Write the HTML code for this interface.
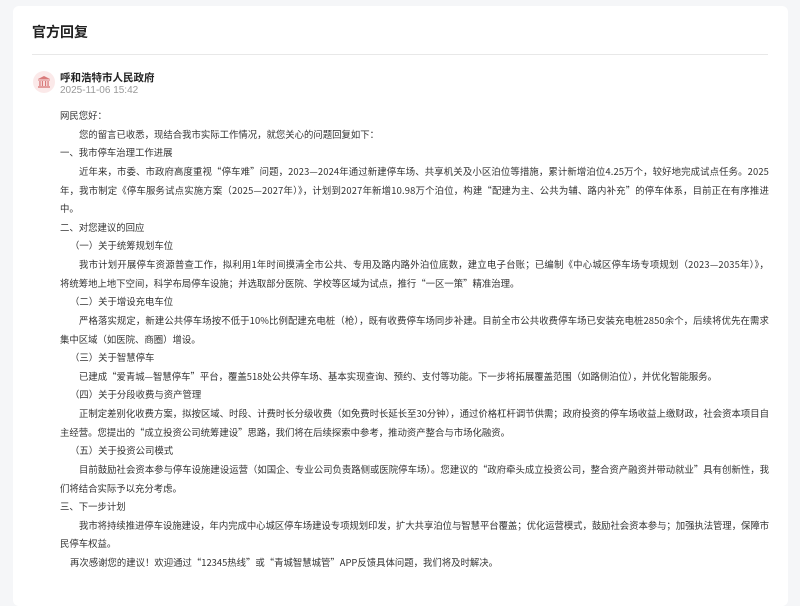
<!DOCTYPE html>
<html><head><meta charset="utf-8"><style>
html,body{margin:0;padding:0;background:#f5f6f8;width:800px;height:572px;overflow:hidden}
.card{position:absolute;left:13px;top:6px;width:775px;height:600px;background:#fff;border-radius:6px}
.title{position:absolute;left:32px;top:22px;font:bold 14px "Liberation Sans","Noto Sans CJK SC",sans-serif;color:#222}
.hr{position:absolute;left:32px;top:54px;width:736px;height:1px;background:#e8e8e8}
.av{position:absolute;left:33px;top:71px;width:22px;height:22px;border-radius:50%;background:#fbe9e9}
.name{position:absolute;left:60px;top:70px;font:bold 10.5px "Liberation Sans","Noto Sans CJK SC",sans-serif;color:#222}
.date{position:absolute;left:60px;top:85px;font:10px "Liberation Sans","Noto Sans CJK SC",sans-serif;color:#999}
.body{position:absolute;left:60px;top:106px;width:712px;font:9.4px/18.63px "Noto Sans CJK SC","Liberation Sans",sans-serif;color:#333}
.body div{white-space:nowrap}
.i{padding-left:19px}.s{padding-left:10px}
.f span{display:inline-block}
</style></head><body>
<div class="card"></div>
<div class="title">官方回复</div>
<div class="hr"></div>
<div class="av"><svg width="22" height="22" viewBox="0 0 22 22"><g fill="#d97a7a"><path d="M11 5 L17 8 H5 Z"/><rect x="5" y="8.5" width="12" height="1"/><rect x="6.3" y="10" width="1.3" height="5"/><rect x="8.8" y="10" width="1.3" height="5"/><rect x="11.9" y="10" width="1.3" height="5"/><rect x="14.4" y="10" width="1.3" height="5"/><rect x="5" y="15.3" width="12" height="1.4"/></g></svg></div>
<div class="name">呼和浩特市人民政府</div>
<div class="date">2025-11-06 15:42</div>
<div class="body">
<div>网民您好：</div>
<div class="i">您的留言已收悉，现结合我市实际工作情况，就您关心的问题回复如下：</div>
<div>一、我市停车治理工作进展</div>
<div class="i f"><span>近年来，市委、市政府高度重视“停车难”问题，2023—2024年通过新建停车场、共享机关及小区泊位等措施，累计新增泊位4.25万个，较好地完成试点任务。2025</span></div>
<div class="f"><span>年，我市制定《停车服务试点实施方案（2025—2027年）》，计划到2027年新增10.98万个泊位，构建“配建为主、公共为辅、路内补充”的停车体系，目前正在有序推进</span></div>
<div>中。</div>
<div>二、对您建议的回应</div>
<div class="s">（一）关于统筹规划车位</div>
<div class="i f"><span>我市计划开展停车资源普查工作，拟利用1年时间摸清全市公共、专用及路内路外泊位底数，建立电子台账；已编制《中心城区停车场专项规划（2023—2035年）》，</span></div>
<div>将统筹地上地下空间，科学布局停车设施；并选取部分医院、学校等区域为试点，推行“一区一策”精准治理。</div>
<div class="s">（二）关于增设充电车位</div>
<div class="i f"><span>严格落实规定，新建公共停车场按不低于10%比例配建充电桩（枪），既有收费停车场同步补建。目前全市公共收费停车场已安装充电桩2850余个，后续将优先在需求</span></div>
<div>集中区域（如医院、商圈）增设。</div>
<div class="s">（三）关于智慧停车</div>
<div class="i">已建成“爱青城—智慧停车”平台，覆盖518处公共停车场、基本实现查询、预约、支付等功能。下一步将拓展覆盖范围（如路侧泊位），并优化智能服务。</div>
<div class="s">（四）关于分段收费与资产管理</div>
<div class="i f"><span>正制定差别化收费方案，拟按区域、时段、计费时长分级收费（如免费时长延长至30分钟），通过价格杠杆调节供需；政府投资的停车场收益上缴财政，社会资本项目自</span></div>
<div>主经营。您提出的“成立投资公司统筹建设”思路，我们将在后续探索中参考，推动资产整合与市场化融资。</div>
<div class="s">（五）关于投资公司模式</div>
<div class="i f"><span>目前鼓励社会资本参与停车设施建设运营（如国企、专业公司负责路侧或医院停车场）。您建议的“政府牵头成立投资公司，整合资产融资并带动就业”具有创新性，我</span></div>
<div>们将结合实际予以充分考虑。</div>
<div>三、下一步计划</div>
<div class="i f"><span>我市将持续推进停车设施建设，年内完成中心城区停车场建设专项规划印发，扩大共享泊位与智慧平台覆盖；优化运营模式，鼓励社会资本参与；加强执法管理，保障市</span></div>
<div>民停车权益。</div>
<div class="s">再次感谢您的建议！欢迎通过“12345热线”或“青城智慧城管”APP反馈具体问题，我们将及时解决。</div>
</div>
<script>
document.querySelectorAll('.f span').forEach(function(s){
  var target=769-s.getBoundingClientRect().left;
  var w=s.getBoundingClientRect().width;
  var n=s.textContent.length;
  s.style.letterSpacing=((target-w)/n)+'px';
});
</script>
</body></html>
